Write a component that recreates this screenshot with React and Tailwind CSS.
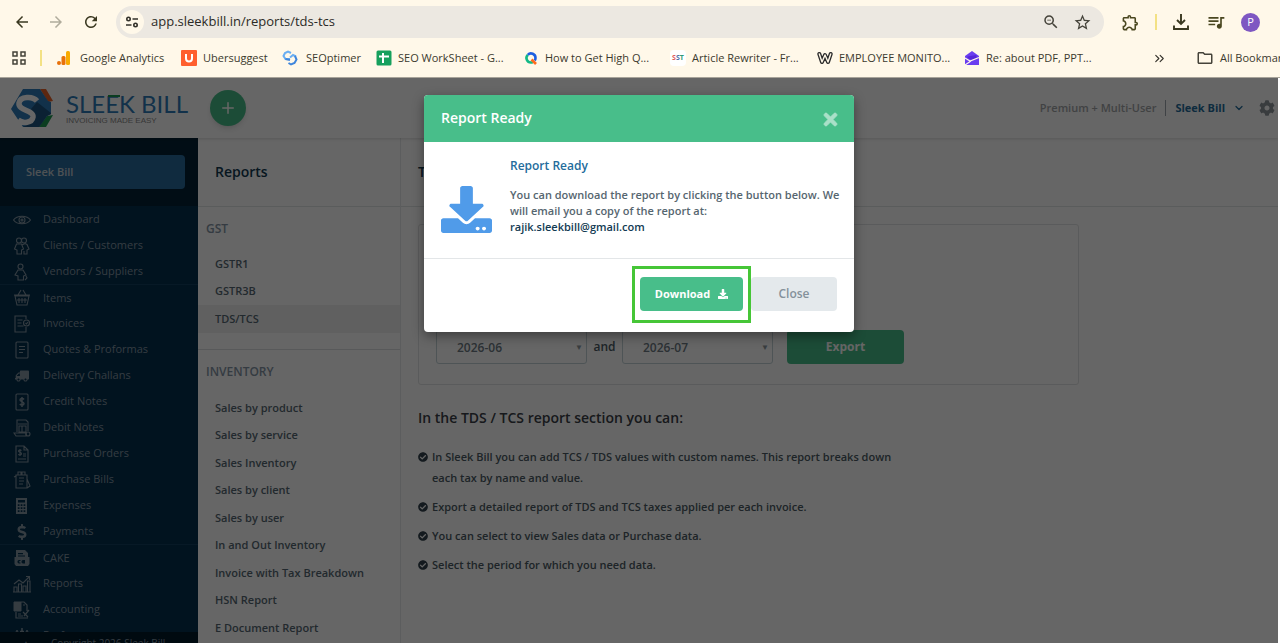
import React from "react";
import {
  MdArrowBack,
  MdArrowForward,
  MdRefresh,
  MdStarBorder,
  MdOutlineZoomOut,
  MdOutlineExtension,
  MdQueueMusic,
  MdOutlineFolder,
} from "react-icons/md";
import { FaDownload, FaTimes, FaCog, FaTruck, FaDollarSign, FaCheckCircle } from "react-icons/fa";
import { ChevronDown, ChevronsRight, Plus } from "lucide-react";

/* ---------- bookmark icons ---------- */

const AnalyticsIcon = () => (
  <svg viewBox="0 0 16 16" className="size-4">
    <rect x="10" y="1" width="4" height="14" rx="1.5" fill="#f9ab00" />
    <rect x="5.5" y="6" width="4" height="9" rx="1.5" fill="#e8710a" />
    <circle cx="3" cy="13" r="2" fill="#e8710a" />
  </svg>
);
const UberIcon = () => (
  <svg viewBox="0 0 16 16" className="size-4">
    <rect width="16" height="16" rx="1" fill="#ff5f2e" />
    <path d="M5 4v4.5a3 3 0 0 0 6 0V4" fill="none" stroke="#fff" strokeWidth="2" />
  </svg>
);
const SeoptimerIcon = () => (
  <svg viewBox="0 0 16 16" className="size-4" fill="none" strokeWidth="2">
    <path d="M9 3 6 1.5 3 3 1.5 6l2 3H8" stroke="#6aaef2" />
    <path d="M3.5 9 8 10" stroke="#3f86dc" />
    <path d="M14 6.5 11 5 8 7.500" stroke="#6aaef2" />
    <path d="m13 6 1.500 3.500-2 3.500L9 14.500 6.500 13" stroke="#3f86dc" />
  </svg>
);
const SheetIcon = () => (
  <svg viewBox="0 0 16 16" className="size-4">
    <rect x="0.500" y="0.500" width="15" height="15" rx="1.500" fill="#16a05d" />
    <path d="M7 3v10M3 6.500h10" stroke="#fff" strokeWidth="2" />
  </svg>
);
const QIcon = () => (
  <svg viewBox="0 0 16 16" className="size-4" fill="none" strokeWidth="2.600">
    <path d="M8 12.500a4.500 4.500 0 0 1-3.200-7.700" stroke="#12b886" />
    <path d="M4.800 4.800A4.500 4.500 0 0 1 12.500 8a4.500 4.500 0 0 1-.8 2.500" stroke="#1d5fe0" />
    <path d="M8 12.500a4.500 4.500 0 0 0 1.800-.4" stroke="#12b886" />
    <path d="m8.500 9.500 4.500 4.500" stroke="#ff6a1f" />
  </svg>
);
const SstIcon = () => (
  <span className="flex h-4 w-4 items-center justify-center rounded-sm bg-white text-[7px] font-bold">
    <span className="text-[#e05a5a]">S</span>
    <span className="text-[#4b6ea8]">S</span>
    <span className="text-[#2f9a78]">T</span>
  </span>
);
const WIcon = () => (
  <svg viewBox="0 0 16 16" className="size-4" fill="none" strokeLinejoin="round" strokeLinecap="round">
    <path d="M2.300 4 5 12 8 5l3 7 2.700-8" stroke="#2c2c2c" strokeWidth="4" />
    <path d="M2.300 4 5 12 8 5l3 7 2.700-8" stroke="#fff8e9" strokeWidth="1.400" />
  </svg>
);
const MailIcon = () => (
  <svg viewBox="0 0 16 16" className="size-4">
    <path d="M1 6 8 1l7 5v9H1z" fill="#6a3df0" />
    <path d="m3.500 6.500 9-1.500v3L8 10.500 3.500 8z" fill="#5526d8" />
    <path d="m1 8 5 3 9-3.500M1 15l6-4" fill="none" stroke="#fff8e9" strokeWidth="1.200" />
  </svg>
);

const bookmarks = [
  { label: "Google Analytics", Icon: AnalyticsIcon, width: "w-[125px] gap-2" },
  { label: "Ubersuggest", Icon: UberIcon, width: "w-[101px] gap-[6px]" },
  { label: "SEOptimer", Icon: SeoptimerIcon, width: "w-[94px] gap-2" },
  { label: "SEO WorkSheet - G...", Icon: SheetIcon, width: "w-[147px] gap-[6px]" },
  { label: "How to Get High Q...", Icon: QIcon, width: "w-[147px] gap-[6px]" },
  { label: "Article Rewriter - Fr...", Icon: SstIcon, width: "w-[147px] gap-[6px]" },
  { label: "EMPLOYEE MONITO...", Icon: WIcon, width: "w-[147px] gap-[6px]" },
  { label: "Re: about PDF, PPT...", Icon: MailIcon, width: "w-[147px] gap-[6px]" },
];

function BrowserBar() {
  return (
    <div className="shrink-0 border-b border-[#a8a49a] bg-[#fff8e9] font-['Open_Sans',sans-serif] text-[#3c3a2e]">
      <div className="flex h-11 items-center pr-5 pl-3">
        <button aria-label="Back" className="flex w-5 justify-center"><MdArrowBack size={18} color="#3a3820" /></button>
        <button aria-label="Forward" className="ml-[14px] flex w-5 justify-center"><MdArrowForward size={18} color="#b0ac9c" /></button>
        <button aria-label="Reload" className="ml-[15px] flex w-5 justify-center"><MdRefresh size={18} color="#3a3820" /></button>
        <div className="ml-[15px] flex h-8 min-w-0 flex-1 items-center rounded-full bg-[#ece8e1] pr-3 pl-1">
          <button aria-label="Site information" className="flex size-6 shrink-0 items-center justify-center rounded-full bg-[#fff8e9]">
            <svg viewBox="0 0 14 12" className="h-3 w-[14px]" fill="none" stroke="#33312a" strokeWidth="1.600">
              <circle cx="3.500" cy="3" r="1.700" />
              <path d="M7.500 3H13M1 9h5.500" />
              <circle cx="10.500" cy="9" r="1.700" />
            </svg>
          </button>
          <input
            aria-label="Address"
            defaultValue="app.sleekbill.in/reports/tds-tcs"
            className="ml-[7px] min-w-0 flex-1 bg-transparent text-[13px] text-[#2b2a26] outline-none"
          />
          <button aria-label="Zoom"><MdOutlineZoomOut size={18} color="#45433a" /></button>
          <button aria-label="Bookmark" className="ml-[13px]"><MdStarBorder size={19} color="#45433a" /></button>
        </div>
        <button aria-label="Extensions" className="ml-[17px]"><MdOutlineExtension size={19} color="#4a4720" /></button>
        <span className="ml-[15px] h-4 w-[2px] bg-[#f3e184]" />
        <button aria-label="Downloads" className="ml-4">
          <svg viewBox="0 0 16 16" className="size-4" fill="none" stroke="#3a3820" strokeWidth="1.900">
            <path d="M8 0v9.500M4 6l4 4 4-4M1 11.500V15h14v-3.500" />
          </svg>
        </button>
        <button aria-label="Media controls" className="ml-[17px]"><MdQueueMusic size={20} color="#4a4720" /></button>
        <button aria-label="Profile" className="ml-[15px] flex size-[19px] items-center justify-center rounded-full bg-[#7e57c2] text-[11px] text-white">P</button>
      </div>
      <div className="flex h-[33px] items-start overflow-hidden pt-1 pl-3 text-[11px] whitespace-nowrap">
        <div className="flex h-5 flex-1 items-center">
          <button aria-label="Apps">
            <svg viewBox="0 0 14 14" className="size-[14px]" fill="none" stroke="#45433a" strokeWidth="1.500">
              <path d="M1 1h4v4H1zM9 1h4v4H9zM1 9h4v4H1zM9 9h4v4H9z" />
            </svg>
          </button>
          <span className="ml-[14px] h-4 w-[2px] bg-[#f3e184]" />
          <nav className="ml-[14px] flex">
            {bookmarks.map(({ label, Icon, width }) => (
              <a key={label} href="#" className={"flex items-center " + width}>
                <Icon />
                <span>{label}</span>
              </a>
            ))}
          </nav>
        </div>
        <div className="flex h-5 w-[128px] shrink-0 items-center">
          <button aria-label="More bookmarks"><ChevronsRight size={15} color="#33312a" strokeWidth={1.8} /></button>
          <span className="ml-[14px] h-4 w-[2px] bg-[#f3e184]" />
          <a href="#" className="ml-[15px] flex items-center gap-[6px]"><MdOutlineFolder size={18} color="#45433a" />All Bookmarks</a>
        </div>
      </div>
    </div>
  );
}

/* ---------- application header ---------- */

function Logo() {
  return (
    <a href="#" aria-label="Sleek Bill home" className="flex items-center gap-3">
      <svg viewBox="0 0 44 38" className="h-[38px] w-11">
        <path d="M30 0h6l7 12-5 1z" fill="#e8622a" />
        <path d="M43 26 36 38h-8l9-11z" fill="#1d9a50" />
        <path d="M13 0h17l8 12 3 1v12l-4 2-8 11H13L1 20z" fill="#2e7cb8" />
        <path d="M27 13 41 24v1l-4 2-8 11H13l7-4 5-6-4-8z" fill="#1c5480" />
        <path d="M27 12C23 7 10 7 9 14c-1 8 15 7 14 14-1 6-10 7-15 3" fill="none" stroke="#fff" strokeWidth="5.500" />
      </svg>
      <span className="flex flex-col">
        <span className="relative font-[Lato,sans-serif] text-2xl leading-6 text-[#2e7cb8]">
          SLEEK BILL
          <span className="absolute top-[3px] left-[42px] h-[2px] w-3 bg-[#1d9a50]" />
        </span>
        <span className="font-['Liberation_Sans',sans-serif] text-[8px] leading-[9px] text-[#8a8a8a]">INVOICING MADE EASY</span>
      </span>
    </a>
  );
}

function AppHeader() {
  return (
    <header className="relative flex h-[60px] shrink-0 items-center bg-white pr-[3px] pl-[10px] shadow-[0_1px_3px_rgba(0,0,0,0.15)]">
      <Logo />
      <button aria-label="Add new" className="ml-[22px] flex size-9 items-center justify-center rounded-full bg-[#48be8a] text-white shadow-md">
        <Plus size={18} strokeWidth={2} />
      </button>
      <div className="ml-auto flex items-center text-[11px] font-semibold">
        <span className="text-[#a3a6a9]">Premium + Multi-User</span>
        <span className="mx-[9px] h-4 w-px bg-[#9fa6ad]" />
        <button className="flex items-center gap-2 font-bold text-[#246c9c]">
          Sleek Bill
          <ChevronDown size={12} strokeWidth={2.5} />
        </button>
        <button aria-label="Settings" className="ml-[14px]"><FaCog size={16} color="#90979c" /></button>
      </div>
    </header>
  );
}

/* ---------- sidebar ---------- */

const Line = ({ children }) => (
  <svg viewBox="0 0 18 18" className="size-[18px]" fill="none" stroke="currentColor" strokeWidth="1.100">{children}</svg>
);

const icons = {
  eye: <Line><path d="M.5 9C4 4 14 4 17.500 9 14 14 4 14 .5 9z" /><circle cx="9" cy="9" r="3" /><circle cx="9" cy="9" r="1" /></Line>,
  people: <Line><circle cx="6" cy="3.500" r="2.500" /><circle cx="11" cy="3.500" r="2.500" /><path d="M4 17v-4l-2.500-1 2-5h5l2 5-2 1v4zM9 8l3-1.500 2 1 2 4.500-2 1v4h-3v-3" /></Line>,
  person: <Line><circle cx="7.500" cy="3.500" r="2.500" /><path d="M5 17v-4l-3-1 3-5h5l3 5-2.500 1v4zM13 13l1 2-2 2" /></Line>,
  basket: <Line><path d="M1 6h16M2 7l2 9h10l2-9zM5 6l3-5M13 6l-3-5M6 9v5M9 9v5M12 9v5M4 11h10" /></Line>,
  invoice: <Line><path d="M13 4V1H2v16h11v-5M4.500 5h5M4.500 8h4M4.500 11h6" /><circle cx="13.500" cy="8" r="3" /><path d="m12.500 8 1 1 1.500-2" /></Line>,
  doc: <Line><rect x="3" y="1" width="12" height="16" rx="1" /><path d="M6 5.500h6M6 8.500h6M6 11.500h4" /></Line>,
  truck: <FaTruck size={14} className="-scale-x-100" />,
  dollarDoc: <Line><rect x="3" y="1" width="12" height="16" rx="1" /><path d="M11 6.500C10 5 7 5.300 7 7s4 1.500 4 3.500-3 2-4.200.5M9 4v10" strokeWidth="1.500" /></Line>,
  debit: <Line><path d="M4 13V1h9l2 2v9M5 5h9M6 7h7v6H6zM9 7v6M1 14h12v3H3z" /><circle cx="15" cy="15" r="2" /></Line>,
  order: <Line><path d="M3 1h8l4 4v12H3zM11 1v4h4M8.500 5.500C7.500 4.500 5.500 5 5.500 6.200s3 1 3 2.500-2.500 1.500-3.200.5M7 4v7M10 9h3M10 11h3M5 14h8" /></Line>,
  bills: <Line><path d="M3 4h11v13H3zM5 4V1h3v3M9 4V1h3v3M6 7h5M6 10h5M1 6l2-1M14 8l3 7-3 2M6 13h4" /></Line>,
  calc: (
    <svg viewBox="0 0 18 18" className="size-[18px]">
      <path
        fill="currentColor"
        fillRule="evenodd"
        d="M3 1h11v16H3zM5 3v2.500h7V3zM4.800 7.300v1.700h1.700V7.300zm2.900 0v1.700h1.700V7.300zm2.900 0v1.700h1.700V7.300zM4.800 10.300V12h1.700v-1.700zm2.900 0V12h1.700v-1.700zm2.900 0V12h1.700v-1.700zM4.800 13.300V15h1.700v-1.700zm2.900 0V15h1.700v-1.700zm2.900 0V15h1.700v-1.700z"
      />
    </svg>
  ),
  dollar: <FaDollarSign size={16} />,
  cake: (
    <svg viewBox="0 0 18 18" className="size-[18px]" fill="currentColor">
      <path fillRule="evenodd" d="M3 1h9l3 3v4h1.500v7L15 17H3l-1.500-2V8H3zM5 4v1.200h5V4zm0 2.500v1h7v-1zM6 11c-2 0-2 3.500 0 3.500h1.500v-1H6.300v-1.500h1.200v-1zM10 11c-2 0-2 3.500 0 3.500h2V11z" />
    </svg>
  ),
  chart: <Line><path d="M1 17V12h3v5M5.500 17V9h3v8M10 17v-6h3v6M14.500 17V6h2.500v11zM1 9l5-4 4 3 6-6M13 1.500h3.500V5M0 17h18" /></Line>,
  accounting: (
    <svg viewBox="0 0 18 18" className="size-[18px]" fill="none" stroke="currentColor">
      <path d="M1 1h7v9H1z" fill="currentColor" />
      <path d="M8 1h3l3 3v6M10 4h2M3 11v6h12M5 13h3M5 15h5M10 11l5 5M16 9l-5 6" strokeWidth="1.200" />
    </svg>
  ),
  sliders: <Line><path d="M4 3v14M9 1v16M14 3v14M2 5.500h4M7 4.500h4M12 5.500h4" strokeWidth="1.500" /></Line>,
};

const menu = [
  [["Dashboard", "eye"], ["Clients / Customers", "people"], ["Vendors / Suppliers", "person"]],
  [
    ["Items", "basket"], ["Invoices", "invoice"], ["Quotes & Proformas", "doc"], ["Delivery Challans", "truck"],
    ["Credit Notes", "dollarDoc"], ["Debit Notes", "debit"], ["Purchase Orders", "order"], ["Purchase Bills", "bills"],
    ["Expenses", "calc"], ["Payments", "dollar"],
  ],
  [["CAKE", "cake"], ["Reports", "chart"], ["Accounting", "accounting"], ["Preferences", "sliders"]],
];

function Sidebar() {
  return (
    <aside className="flex w-[198px] shrink-0 flex-col overflow-hidden bg-[#03304e] text-[11px] font-medium text-[#8496a4]">
      <div className="h-[68px] shrink-0 bg-[#042236] px-[13px] pt-[17px]">
        <button className="h-[34px] w-full rounded bg-[#2a6c9f] px-[13px] text-left font-semibold text-[#c3ccd3]">Sleek Bill</button>
      </div>
      <nav className="min-h-0 flex-1 overflow-hidden">
        {menu.map((group, g) => (
          <ul key={g} className={g > 0 ? "border-t border-[#12405f]" : ""}>
            {group.map(([label, icon], i) => (
              <li key={label} className={g > 0 && i === 0 ? "h-[25px]" : "h-[26px]"}>
                <a href="#" className="flex h-full items-center pt-px pl-[13px]">
                  <span className="flex w-[18px] justify-center">{icons[icon]}</span>
                  <span className="ml-3">{label}</span>
                </a>
              </li>
            ))}
          </ul>
        ))}
      </nav>
      <div className="h-[11px] shrink-0 overflow-hidden bg-[#02192a] pt-1 pl-[21px] text-[10px] leading-[14px]">
        <span className="mr-5">▲</span>Copyright 2026 Sleek Bill
      </div>
    </aside>
  );
}

/* ---------- report list ---------- */

const inventory = [
  "Sales by product", "Sales by service", "Sales Inventory", "Sales by client", "Sales by user",
  "In and Out Inventory", "Invoice with Tax Breakdown", "HSN Report", "E Document Report",
];

function ReportLink({ label, active }) {
  return (
    <li className={active ? "bg-[#f1f1f1]" : ""}>
      <a href="#" className="flex h-full items-center pl-[17px]">{label}</a>
    </li>
  );
}

function ReportList() {
  return (
    <section className="w-[203px] shrink-0 border-r border-[#e6e9eb] text-[11px] font-semibold text-[#566873]">
      <h2 className="flex h-[69px] items-center border-b border-[#e2e5e7] pl-[17px] text-sm text-[#123a52]">Reports</h2>
      <h3 className="mt-3 pl-2 text-xs leading-5 text-[#8495a5]">GST</h3>
      <ul className="mt-[11px] grid h-[83px] auto-rows-fr">
        <ReportLink label="GSTR1" />
        <ReportLink label="GSTR3B" />
        <ReportLink label="TDS/TCS" active />
      </ul>
      <h3 className="mt-4 border-t border-[#dcdfe1] pt-3 pl-2 text-xs leading-5 text-[#8495a5]">INVENTORY</h3>
      <ul className="mt-3 grid h-[248px] auto-rows-fr">
        {inventory.map((label) => <ReportLink key={label} label={label} />)}
      </ul>
    </section>
  );
}

/* ---------- main content ---------- */

function MonthSelect({ label, value }) {
  return (
    <span className="relative">
      <select aria-label={label} defaultValue={value} className="h-[34px] w-[151px] appearance-none rounded-[3px] border border-[#c3d3d8] bg-white pt-px pl-5 text-xs text-[#6e7b84]">
        <option>{value}</option>
      </select>
      <span className="pointer-events-none absolute top-3 right-1 text-[8px] text-[#8f9aa1]">▼</span>
    </span>
  );
}

const notes = [
  "In Sleek Bill you can add TCS / TDS values with custom names. This report breaks down each tax by name and value.",
  "Export a detailed report of TDS and TCS taxes applied per each invoice.",
  "You can select to view Sales data or Purchase data.",
  "Select the period for which you need data.",
];

function Content() {
  return (
    <main className="min-w-0 flex-1 text-[11px] font-semibold text-[#4b5a64]">
      <h1 className="flex h-[69px] items-center border-b border-[#e2e5e7] pl-[17px] text-sm text-[#123a52]">TDS / TCS</h1>
      <div className="px-[17px] pt-[17px]">
        <form className="flex w-full max-w-[661px] items-center rounded-[3px] border border-[#e2e4e5] px-[17px] pt-[105px] pb-5 text-xs" onSubmit={(e) => e.preventDefault()}>
          <MonthSelect label="From month" value="2026-06" />
          <span className="w-[35px] text-center">and</span>
          <MonthSelect label="To month" value="2026-07" />
          <button className="ml-[14px] h-[34px] w-[117px] rounded bg-[#48be8a] font-bold text-white">Export</button>
        </form>
        <h2 className="mt-[23px] text-sm leading-5 text-[#3a4046]">In the TDS / TCS report section you can:</h2>
        <ul className="mt-[18px] flex max-w-[500px] flex-col gap-2">
          {notes.map((note) => (
            <li key={note} className="flex gap-1 leading-[21px]">
              <span className="flex h-[21px] shrink-0 items-center"><FaCheckCircle size={10} color="#33434e" /></span>
              {note}
            </li>
          ))}
        </ul>
      </div>
    </main>
  );
}

/* ---------- dialog ---------- */

function ReportDialog() {
  return (
    <div className="absolute inset-0 flex items-start justify-center bg-black/60 pt-[17px]">
      <div role="dialog" aria-label="Report Ready" className="w-[430px] overflow-hidden rounded bg-white shadow-[0_4px_12px_rgba(0,0,0,0.4)]">
        <div className="flex h-[47px] items-center justify-between bg-[#48be8a] pr-[14px] pb-px pl-[17px]">
          <h2 className="text-sm font-semibold text-white">Report Ready</h2>
          <button aria-label="Dismiss" className="pt-[2px]">
            <FaTimes size={19} color="#a9e0c8" stroke="#a9e0c8" strokeWidth="24" />
          </button>
        </div>
        <div className="flex h-[116px] pt-[14px] pl-[17px]">
          <FaDownload color="#509be9" preserveAspectRatio="none" className="mt-[30px] h-[47px] w-[51px] shrink-0" />
          <div className="ml-[18px] text-[11px] font-semibold text-[#56666f]">
            <h3 className="text-xs leading-5 text-[#246c9c]">Report Ready</h3>
            <p className="mt-[11px] leading-4">You can download the report by clicking the button below. We will email you a copy of the report at:</p>
            <p className="leading-4 text-[#123a52]">rajik.sleekbill@gmail.com</p>
          </div>
        </div>
        <div className="flex h-[74px] items-start justify-end gap-2 border-t border-[#e3e6e8] pt-[18px] pr-[17px]">
          <div className="relative">
            <button className="flex h-[34px] w-[103px] items-center justify-center gap-2 rounded bg-[#48be8a] text-[11px] font-bold text-white">
              Download <FaDownload size={10} />
            </button>
            <span className="pointer-events-none absolute -top-[11px] -right-2 -bottom-3 -left-2 border-[3px] border-[#46c637]" />
          </div>
          <button className="h-[34px] w-[86px] rounded bg-[#e4e9ec] text-xs font-semibold text-[#84919a]">Close</button>
        </div>
      </div>
    </div>
  );
}

export default function App() {
  return (
    <div className="flex h-screen flex-col overflow-hidden bg-white">
      <BrowserBar />
      <div className="relative mr-[2px] flex min-h-0 flex-1 flex-col overflow-hidden font-['Open_Sans',sans-serif]">
        <AppHeader />
        <div className="flex min-h-0 flex-1 overflow-hidden">
          <Sidebar />
          <ReportList />
          <Content />
        </div>
        <ReportDialog />
      </div>
    </div>
  );
}
